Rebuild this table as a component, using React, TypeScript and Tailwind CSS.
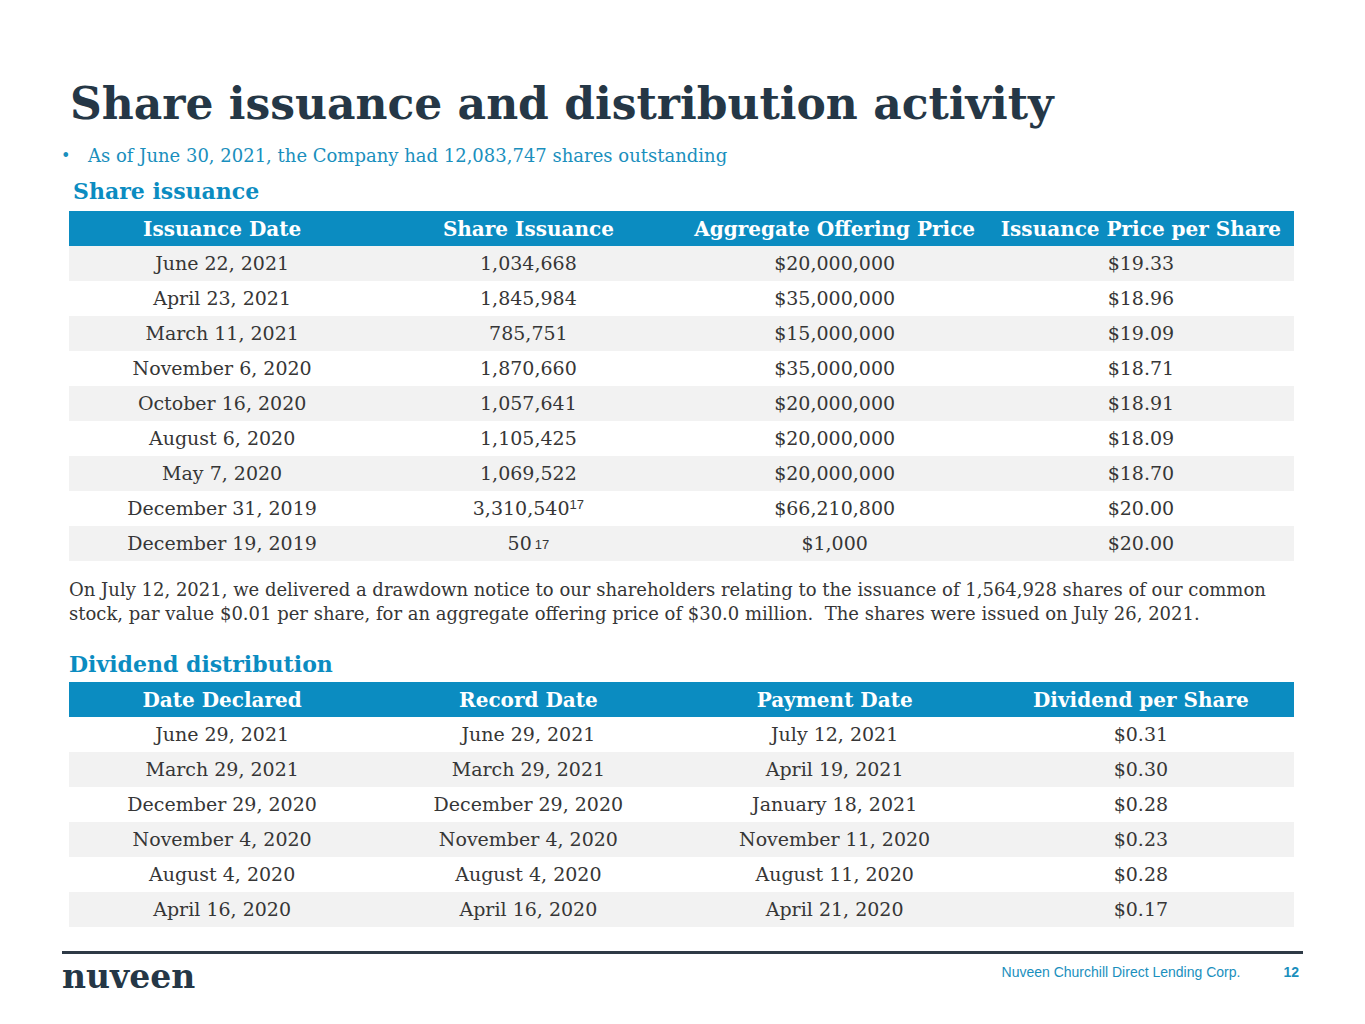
const serif = "font-['DejaVu_Serif',serif]";

const issuance: [string, React.ReactNode, string, string][] = [
  ["June 22, 2021", "1,034,668", "$20,000,000", "$19.33"],
  ["April 23, 2021", "1,845,984", "$35,000,000", "$18.96"],
  ["March 11, 2021", "785,751", "$15,000,000", "$19.09"],
  ["November 6, 2020", "1,870,660", "$35,000,000", "$18.71"],
  ["October 16, 2020", "1,057,641", "$20,000,000", "$18.91"],
  ["August 6, 2020", "1,105,425", "$20,000,000", "$18.09"],
  ["May 7, 2020", "1,069,522", "$20,000,000", "$18.70"],
  [
    "December 31, 2019",
    <>
      3,310,540
      <sup className="relative -top-[6px] font-['Liberation_Sans',sans-serif] text-[13px]">17</sup>
    </>,
    "$66,210,800",
    "$20.00",
  ],
  [
    "December 19, 2019",
    <>
      50
      <sup className="relative -top-[1px] ml-[3px] font-['Liberation_Sans',sans-serif] text-[13px]">17</sup>
    </>,
    "$1,000",
    "$20.00",
  ],
];

const dividends = [
  ["June 29, 2021", "June 29, 2021", "July 12, 2021", "$0.31"],
  ["March 29, 2021", "March 29, 2021", "April 19, 2021", "$0.30"],
  ["December 29, 2020", "December 29, 2020", "January 18, 2021", "$0.28"],
  ["November 4, 2020", "November 4, 2020", "November 11, 2020", "$0.23"],
  ["August 4, 2020", "August 4, 2020", "August 11, 2020", "$0.28"],
  ["April 16, 2020", "April 16, 2020", "April 21, 2020", "$0.17"],
];

function Table({
  headers,
  rows,
  firstGray,
}: {
  headers: string[];
  rows: React.ReactNode[][];
  firstGray: boolean;
}) {
  return (
    <div className="w-[1225px]">
      <div className="grid h-[35px] grid-cols-4 items-center bg-[#0b8cc1] text-[20px] font-bold text-white">
        {headers.map((h) => (
          <div key={h} className="whitespace-nowrap text-center">
            {h}
          </div>
        ))}
      </div>
      {rows.map((r, i) => {
        const gray = firstGray ? i % 2 === 0 : i % 2 === 1;
        return (
          <div
            key={i}
            className={`grid h-[35px] grid-cols-4 items-center text-[19px] text-[#363636] ${
              gray ? "bg-[#f2f2f2]" : "bg-white"
            }`}
          >
            {r.map((c, j) => (
              <div key={j} className="text-center">
                {c}
              </div>
            ))}
          </div>
        );
      })}
    </div>
  );
}

export default function App() {
  return (
    <div className={`relative h-[1024px] w-[1365px] bg-white ${serif}`}>
      <div className="px-[69px] pt-[76px]">
        <h1 className="ml-[1px] text-[44px] font-bold leading-[56px] text-[#253746]">
          Share issuance and distribution activity
        </h1>
        <div className="-ml-[8px] mt-[12px] flex items-center text-[18px] leading-[24px] text-[#1a8fbd]">
          <span className="w-[27px] text-[16px]">•</span>
          <span>As of June 30, 2021, the Company had 12,083,747 shares outstanding</span>
        </div>
        <h2 className="ml-[4px] mt-[11px] text-[22px] font-bold leading-[24px] text-[#0b8cc1]">
          Share issuance
        </h2>
        <div className="mt-[8px]">
          <Table
            headers={["Issuance Date", "Share Issuance", "Aggregate Offering Price", "Issuance Price per Share"]}
            rows={issuance}
            firstGray
          />
        </div>
        <p className="mt-[17px] w-[1225px] text-[18px] leading-[24px] text-[#363636]">
          On July 12, 2021, we delivered a drawdown notice to our shareholders relating to the issuance of 1,564,928 shares of our common stock, par value $0.01 per share, for an aggregate offering price of $30.0 million.&nbsp; The shares were issued on July 26, 2021.
        </p>
        <h2 className="mt-[26px] text-[22px] font-bold leading-[24px] text-[#0b8cc1]">
          Dividend distribution
        </h2>
        <div className="mt-[6px]">
          <Table
            headers={["Date Declared", "Record Date", "Payment Date", "Dividend per Share"]}
            rows={dividends}
            firstGray={false}
          />
        </div>
      </div>
      <div className="mx-[62px] mt-[24px] h-[3px] bg-[#2e3a46]" />
      <div className="mx-[62px] flex items-start justify-between">
        <div className="mt-[3px] text-[33px] font-bold leading-[40px] text-[#253746]">nuveen</div>
        <div className="mr-[4px] mt-[8px] flex gap-[43px] font-['Liberation_Sans',sans-serif] text-[14px] text-[#1a8fbd]">
          <span>Nuveen Churchill Direct Lending Corp.</span>
          <span className="font-bold">12</span>
        </div>
      </div>
    </div>
  );
}
